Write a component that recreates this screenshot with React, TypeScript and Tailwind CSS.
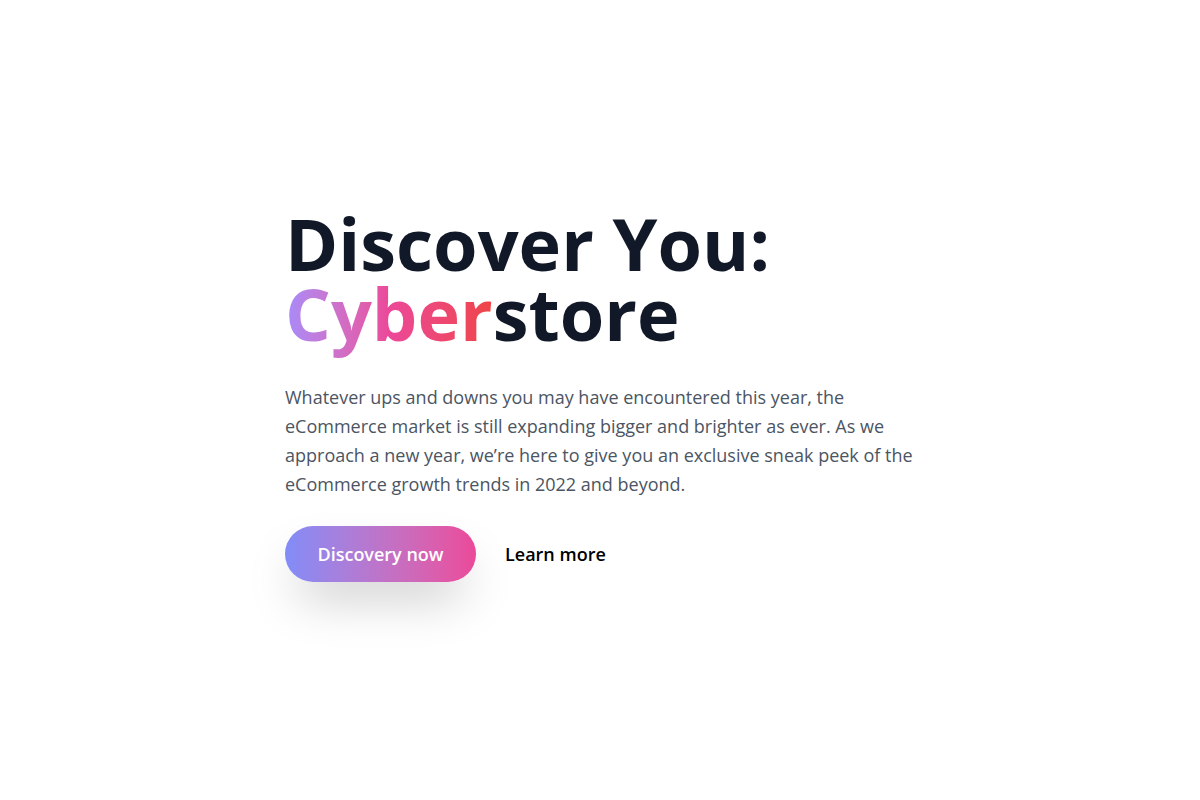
import React from "react";

export default function App() {
  return (
    <div className="min-h-screen w-full bg-white flex items-center" style={{ fontFamily: '"Open Sans", "Noto Sans", sans-serif' }}>
      <div className="pl-[285px] pb-[10px] w-full">
        <h1 className="text-[72px] leading-[70px] font-bold text-[#111827]">
          Discover You:
          <br />
          <span className="bg-gradient-to-r from-[#a78bfa] via-[#ec4899] to-[#ef4444] bg-clip-text text-transparent">Cyber</span>
          store
        </h1>
        <p className="mt-[35px] max-w-[640px] text-[18px] leading-[29px] text-[#4b5563]">
          Whatever ups and downs you may have encountered this year, the eCommerce market is still expanding bigger and brighter as ever. As we approach a new year, we’re here to give you an exclusive sneak peek of the eCommerce growth trends in 2022 and beyond.
        </p>
        <div className="mt-[27px] flex items-center gap-[29px]">
          <button className="h-[56px] w-[191px] rounded-full bg-gradient-to-r from-[#818cf8] to-[#ec4899] text-white text-[18px] font-semibold shadow-2xl">
            Discovery now
          </button>
          <button className="text-[18px] font-semibold text-black">Learn more</button>
        </div>
      </div>
    </div>
  );
}
